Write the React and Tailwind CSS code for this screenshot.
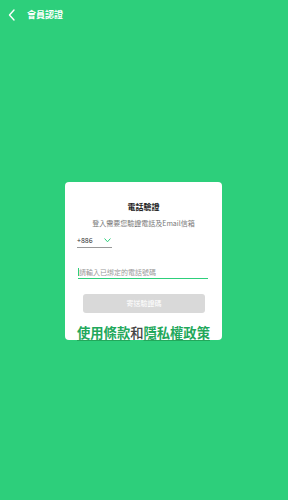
import React from "react";

const App = () => {
  return (
    <div
      className="w-[288px] h-[500px] bg-[#2dcf7b] flex flex-col overflow-hidden"
      style={{ fontFamily: '"Noto Sans CJK TC", "Noto Sans", sans-serif' }}
    >
      {/* header */}
      <div className="h-[28px] flex items-center pl-[8px]">
        <svg width="8" height="12" viewBox="0 0 8 12" className="mt-[1px]">
          <path d="M6 1 L1.5 6 L6 11" fill="none" stroke="white" strokeWidth="1.4" strokeLinecap="round" strokeLinejoin="round" />
        </svg>
        <span className="ml-[11px] text-[9px] font-bold text-white leading-none">會員認證</span>
      </div>

      {/* card */}
      <div className="ml-[65px] mt-[154px] w-[157px] h-[158px] bg-white rounded-[4px] flex flex-col">
        <div className="mt-[20px] text-center text-[8px] font-bold text-[#222] leading-[10px]">電話驗證</div>
        <div className="mt-[6px] text-center text-[7px] text-[#777] leading-[10px]">登入需要您驗證電話及Email信箱</div>

        <div className="mt-[7px] ml-[12px] w-[35px] border-b border-[#999] flex items-center justify-between pb-[2px]">
          <span className="text-[7px] text-[#333] leading-[10px]">+886</span>
          <svg width="7" height="5" viewBox="0 0 7 5" className="mr-[1px]">
            <path d="M0.8 0.8 L3.5 3.8 L6.2 0.8" fill="none" stroke="#2dcf7b" strokeWidth="1" strokeLinecap="round" strokeLinejoin="round" />
          </svg>
        </div>

        <div className="mt-[19px] ml-[13px] w-[130px] border-b-[1.5px] border-[#2dcf7b] flex items-center pb-[1px]">
          <span className="w-[1px] h-[8px] bg-[#2dcf7b]"></span>
          <span className="text-[7px] text-[#999] leading-[10px]">請輸入已綁定的電話號碼</span>
        </div>

        <div className="mt-[15px] ml-[18px] w-[122px] h-[21px] rounded-[3px] bg-[#d9d9d9] flex items-center justify-center">
          <span className="text-[7px] text-white leading-none">寄送驗證碼</span>
        </div>

        <div className="mt-[12px] ml-[12px] text-[13.3px] font-bold leading-[15px] whitespace-nowrap">
          <span className="text-[#22a85b] underline underline-offset-2">使用條款</span>
          <span className="text-[#444] font-medium">和</span>
          <span className="text-[#22a85b] underline underline-offset-2">隱私權政策</span>
        </div>
      </div>
    </div>
  );
};

export default App;
